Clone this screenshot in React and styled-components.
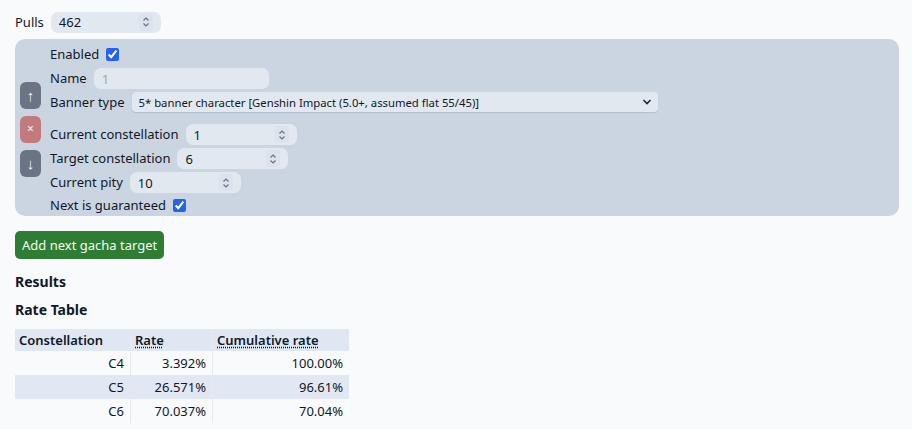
import React from 'react';
import styled, { createGlobalStyle } from 'styled-components';

const GlobalStyle = createGlobalStyle`
  body {
    margin: 0;
    background: #f8fafc;
    color: #111827;
    font-family: "Noto Sans", "Open Sans", sans-serif;
    font-size: 13px;
  }
`;

const Page = styled.div`
  padding: 12px 13px 0 15px;
`;

const Row = styled.div`
  display: flex;
  align-items: center;
  gap: 7px;
  height: ${p => p.$h || 21}px;
  margin-top: ${p => p.$mt || 0}px;
`;

const Label = styled.span`
  line-height: 1;
  white-space: nowrap;
`;

const SpinBox = styled.div`
  display: flex;
  align-items: center;
  width: ${p => p.$w || 111}px;
  height: 21px;
  background: #e2e8f0;
  border-radius: 7px;
  box-sizing: border-box;
  padding: 0 8px 0 8px;
`;

const TextInput = styled.input`
  flex: 1;
  min-width: 0;
  border: none;
  background: transparent;
  font: inherit;
  color: #111827;
  padding: 0;
  outline: none;
  &::placeholder { color: #9ca3af; }
`;

const SpinIcon = styled.span`
  display: flex;
  align-items: center;
  justify-content: center;
  width: 14px;
  height: 17px;
  background: #dde3ec;
  border-radius: 2px;
`;

const Panel = styled.div`
  display: flex;
  align-items: center;
  gap: 9px;
  margin-top: 7px;
  background: #cbd5e1;
  border-radius: 10px;
  padding: 5px 5px 2px 5px;
`;

const SideButtons = styled.div`
  display: flex;
  flex-direction: column;
  gap: 7px;
`;

const SideButton = styled.button`
  width: 21px;
  height: 27px;
  border: none;
  border-radius: 6px;
  padding: 0;
  background: ${p => (p.$danger ? '#c27a7c' : '#6b7385')};
  color: #f1f5f9;
  font: inherit;
  font-size: ${p => (p.$danger ? 12 : 15)}px;
  line-height: 1;
`;

const Form = styled.div`
  display: flex;
  flex-direction: column;
  gap: 3px;
`;

const Check = styled.input`
  width: 13px;
  height: 13px;
  margin: 0;
  accent-color: #2563eb;
`;

const Select = styled.div`
  display: flex;
  align-items: center;
  justify-content: space-between;
  width: 526px;
  height: 20px;
  box-sizing: border-box;
  padding: 0 6px 0 7px;
  background: #e2e8f0;
  border-radius: 4px;
  box-shadow: 0 1px 1px rgba(100, 116, 139, 0.25);
  font-size: 11.3px;
`;

const AddButton = styled.button`
  margin-top: 15px;
  height: 28px;
  padding: 0 7px;
  border: none;
  border-radius: 5px;
  background: #2e7d32;
  color: #f0fdf4;
  font: inherit;
  font-size: 13px;
`;

const Heading = styled.div`
  font-weight: 700;
  font-size: 14px;
  margin-top: ${p => p.$mt}px;
  line-height: 20px;
`;

const Table = styled.table`
  margin-top: 9px;
  border-collapse: collapse;
  table-layout: fixed;
  width: 334px;
`;

const Th = styled.th`
  text-align: left;
  font-weight: 600;
  height: 22px;
  padding: 0 4px;
  background: #dfe7f2;
  width: ${p => p.$w}px;
  & + & { border-left: 1px solid #e5e9f0; }
  abbr { text-decoration: underline dotted; text-underline-offset: 2px; }
`;

const Tr = styled.tr`
  background: ${p => (p.$alt ? '#e2e8f3' : 'transparent')};
`;

const Td = styled.td`
  text-align: right;
  height: 24px;
  padding: 0 6px;
  & + & { border-left: 1px solid #e5e9f0; }
`;

const Spin = () => (
  <SpinIcon>
    <svg width="8" height="12" viewBox="0 0 8 12" fill="none" stroke="#6b7280" strokeWidth="1.2">
      <path d="M1.5 4.5 L4 2 L6.5 4.5" />
      <path d="M1.5 7.5 L4 10 L6.5 7.5" />
    </svg>
  </SpinIcon>
);

const NumberField = ({ value, w }) => (
  <SpinBox $w={w}>
    <TextInput defaultValue={value} />
    <Spin />
  </SpinBox>
);

const rows = [
  ['C4', '3.392%', '100.00%'],
  ['C5', '26.571%', '96.61%'],
  ['C6', '70.037%', '70.04%'],
];

export default function App() {
  return (
    <Page>
      <GlobalStyle />
      <Row $h={20}>
        <Label>Pulls</Label>
        <NumberField value="462" w={110} />
      </Row>

      <Panel>
        <SideButtons>
          <SideButton>↑</SideButton>
          <SideButton $danger>×</SideButton>
          <SideButton>↓</SideButton>
        </SideButtons>
        <Form>
          <Row $h={20}>
            <Label>Enabled</Label>
            <Check type="checkbox" defaultChecked />
          </Row>
          <Row $mt={1}>
            <Label>Name</Label>
            <SpinBox $w={175}>
              <TextInput placeholder="1" />
            </SpinBox>
          </Row>
          <Row $h={20}>
            <Label>Banner type</Label>
            <Select>
              <span>5* banner character [Genshin Impact (5.0+, assumed flat 55/45)]</span>
              <svg width="10" height="6" viewBox="0 0 10 6" fill="none" stroke="#1f2937" strokeWidth="1.6">
                <path d="M1.5 1 L5 4.5 L8.5 1" />
              </svg>
            </Select>
          </Row>
          <Row $mt={9}>
            <Label>Current constellation</Label>
            <NumberField value="1" />
          </Row>
          <Row>
            <Label>Target constellation</Label>
            <NumberField value="6" />
          </Row>
          <Row>
            <Label>Current pity</Label>
            <NumberField value="10" />
          </Row>
          <Row $h={18}>
            <Label>Next is guaranteed</Label>
            <Check type="checkbox" defaultChecked />
          </Row>
        </Form>
      </Panel>

      <AddButton>Add next gacha target</AddButton>

      <Heading $mt={13}>Results</Heading>
      <Heading $mt={8}>Rate Table</Heading>

      <Table>
        <thead>
          <tr>
            <Th $w={107}>Constellation</Th>
            <Th $w={73}><abbr>Rate</abbr></Th>
            <Th $w={128}><abbr>Cumulative rate</abbr></Th>
          </tr>
        </thead>
        <tbody>
          {rows.map((r, i) => (
            <Tr key={r[0]} $alt={i === 1}>
              {r.map(c => <Td key={c}>{c}</Td>)}
            </Tr>
          ))}
        </tbody>
      </Table>
    </Page>
  );
}
